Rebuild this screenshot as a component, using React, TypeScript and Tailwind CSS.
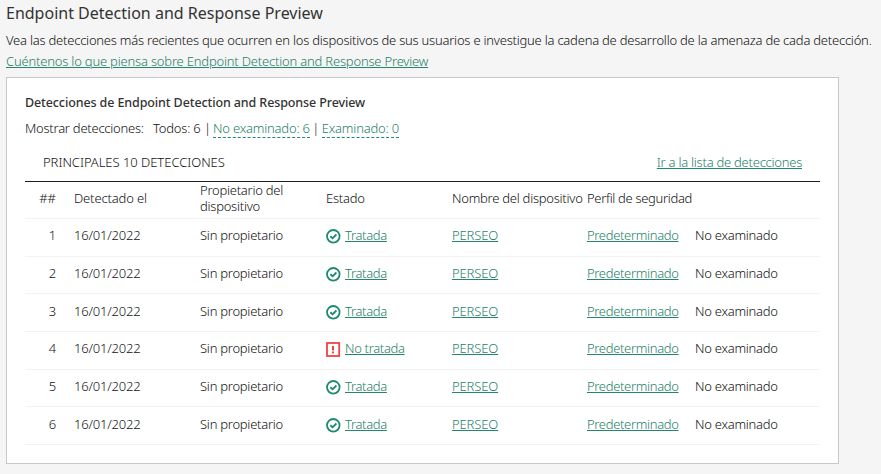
import React from "react";

const link = "text-[#1f7f69] underline decoration-[#23866f] decoration-1 underline-offset-1";
const grid =
  "grid grid-cols-[49px_126px_126px_126px_135px_108px_125px] border-b border-[#f3f3f3] whitespace-nowrap";

function CheckIcon() {
  return (
    <svg className="mt-[2px] h-[15px] w-[15px] shrink-0" viewBox="0 0 15 15" fill="none" stroke="#1f8a70">
      <circle cx="7.3" cy="7.3" r="6.3" strokeWidth="1.8" />
      <path d="M4.3 7.2 6.6 9.3 10.4 5.5" strokeWidth="1.9" />
    </svg>
  );
}

function AlertIcon() {
  return (
    <svg className="mt-[2px] h-[15px] w-[15px] shrink-0" viewBox="0 0 15 15" fill="none">
      <rect x="1" y="1" width="12.2" height="13" stroke="#ee4444" strokeWidth="1.8" />
      <path d="M7 4v4.5M7 9.5v1.7" stroke="#ee4444" strokeWidth="2" />
    </svg>
  );
}

const rows = [1, 2, 3, 4, 5, 6].map((id) => ({ id, treated: id !== 4 }));

export default function App() {
  return (
    <main className="h-[474px] w-[881px] overflow-hidden bg-[#f5f5f5] pl-1.5 font-['Noto_Sans',sans-serif] text-[13px] font-light leading-4 text-[#111]">
      <h1 className="pt-[3px] text-[16px] font-normal leading-5 text-[#333]">
        Endpoint Detection and Response Preview
      </h1>
      <p className="mt-[9px] whitespace-nowrap tracking-[-0.225px]">
        Vea las detecciones más recientes que ocurren en los dispositivos de sus usuarios e investigue la cadena de
        desarrollo de la amenaza de cada detección.
      </p>
      <p className="mt-[5px] whitespace-nowrap tracking-[-0.195px]">
        <a className={link}>Cuéntenos lo que piensa sobre Endpoint Detection and Response Preview</a>
      </p>

      <section className="mt-2 h-[387px] w-[833px] border border-[#c6c9c9] bg-white px-[18px] pt-[17px]">
        <h2 className="whitespace-nowrap text-[12.5px] font-medium tracking-[-0.11px] text-[#333]">
          Detecciones de Endpoint Detection and Response Preview
        </h2>
        <div className="mt-[9px] flex h-[18px] whitespace-nowrap tracking-[-0.2px]">
          <span className="w-32 tracking-[-0.25px]">Mostrar detecciones:</span>
          <span className="w-[51px]">Todos: 6</span>
          <span className="w-[9px]">|</span>
          <a className="h-[18px] border-b border-dashed border-[#23866f] text-[#1f7f69]">No examinado: 6</a>
          <span className="w-[12px] text-center">|</span>
          <a className="h-[18px] border-b border-dashed border-[#23866f] text-[#1f7f69]">Examinado: 0</a>
        </div>
        <div className="mt-[16px] flex h-[28px] w-[795px] justify-between whitespace-nowrap border-b border-[#1d1d1b] px-[18px]">
          <span className="tracking-[-0.04px]">PRINCIPALES 10 DETECCIONES</span>
          <a className={`${link} tracking-[-0.25px]`}>Ir a la lista de detecciones</a>
        </div>
        <div className="w-[795px] tracking-[-0.25px]">
          <div className={`${grid} h-[37px] items-center pb-[4px]`}>
            <span className="pr-[18px] text-right tracking-normal">##</span>
            <span className="tracking-[-0.15px]">Detectado el</span>
            <span>
              Propietario del
              <br />
              dispositivo
            </span>
            <span>Estado</span>
            <span>Nombre del dispositivo</span>
            <span className="tracking-[-0.33px]">Perfil de seguridad</span>
          </div>
          {rows.map(({ id, treated }) => (
            <div key={id} className={`${grid} h-[37.67px] items-center pb-[4px]`}>
              <span className="pr-[18px] text-right">{id}</span>
              <span className="tracking-[-0.2px]">16/01/2022</span>
              <span>Sin propietario</span>
              <span className="flex h-4 gap-1">
                {treated ? <CheckIcon /> : <AlertIcon />}
                <a className={`${link} tracking-[-0.33px]`}>{treated ? "Tratada" : "No tratada"}</a>
              </span>
              <a className={`${link} tracking-[-0.13px]`}>PERSEO</a>
              <a className={`${link} tracking-[-0.33px]`}>Predeterminado</a>
              <span>No examinado</span>
            </div>
          ))}
        </div>
      </section>
    </main>
  );
}
